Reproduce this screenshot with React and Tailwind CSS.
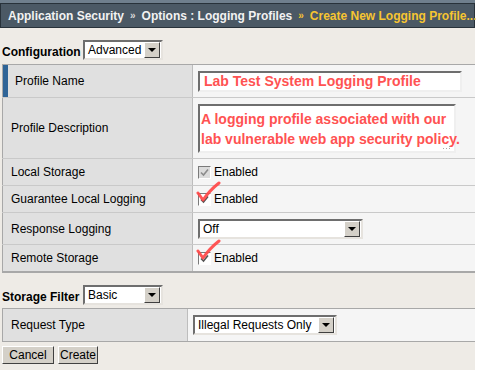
const font = { fontFamily: '"Liberation Sans", Arial, sans-serif' }

function DropButton() {
  return (
    <div className="w-[16px] h-[16px] bg-[#d4d0c8] border border-t-white border-l-white border-r-[#404040] border-b-[#404040] flex items-center justify-center shrink-0">
      <div className="w-0 h-0 border-l-[4px] border-r-[4px] border-t-[4px] border-l-transparent border-r-transparent border-t-black" />
    </div>
  )
}

function Select({ value, width }) {
  return (
    <div
      className={`${width} h-[20px] bg-white border-2 border-t-[#6e6e6e] border-l-[#6e6e6e] border-r-[#e6e3de] border-b-[#e6e3de] flex items-center justify-between pl-[3px] pr-[1px]`}
    >
      <span className="text-[12px] text-black leading-none">{value}</span>
      <DropButton />
    </div>
  )
}

function Checkbox({ disabled }) {
  return (
    <div
      className={`w-[13px] h-[13px] border border-t-[#7a7a7a] border-l-[#7a7a7a] border-r-white border-b-white flex items-center justify-center ${
        disabled ? 'bg-[#dcdcdc]' : 'bg-white'
      }`}
    >
      <svg width="9" height="9" viewBox="0 0 9 9">
        <path d="M1 4.5 L3.5 7 L8 1.5" fill="none" stroke={disabled ? '#8c8c8c' : '#555'} strokeWidth="1.6" />
      </svg>
    </div>
  )
}

function RedCheck({ top }) {
  return (
    <svg
      className="absolute left-[-2px] pointer-events-none"
      style={{ top }}
      width="26"
      height="24"
      viewBox="0 0 26 24"
    >
      <path
        d="M2 12 L7 19 Q14 9 23 2"
        fill="none"
        stroke="#ff4747"
        strokeWidth="3"
        strokeLinecap="round"
        strokeLinejoin="round"
        opacity="0.92"
      />
    </svg>
  )
}

function Row({ label, height, first, last, children, labelPad = 'pl-[8px]' }) {
  return (
    <div
      className={`flex ${height} ${last ? 'border-b-2 border-b-[#a8a8a8]' : 'border-b border-b-[#c9c9c9]'}`}
    >
      <div className="w-[191px] shrink-0 bg-[#e0e0e0] border-l border-l-[#a8a8a8] border-r border-r-[#bdbdbd] flex items-center">
        {first && <div className="w-[5px] self-stretch bg-[#2f6497]" />}
        <span className={`text-[12px] text-black ${first ? 'pl-[7px]' : labelPad}`}>{label}</span>
      </div>
      <div className="flex-1 bg-[#f5f5f5] flex items-center pl-[5px]">{children}</div>
    </div>
  )
}

function Enabled({ disabled, check }) {
  return (
    <div className="relative flex items-center gap-[3px]">
      <Checkbox disabled={disabled} />
      <span className="text-[12px] text-black">Enabled</span>
      {check && <RedCheck top={check} />}
    </div>
  )
}

export default function App() {
  return (
    <div className="w-[486px] h-[370px] flex bg-white overflow-hidden" style={font}>
      <div className="w-[475px] h-full bg-[#eeebe6] flex flex-col">
        {/* breadcrumb bar */}
        <div className="h-[3px] bg-[#6f7f8d]" />
        <div className="h-[25px] bg-[#4b5965] border border-[#28323a] flex items-center pl-[7px] text-[12px] font-bold whitespace-nowrap">
          <span className="text-[#f2f2f2]">Application Security</span>
          <span className="text-[#d8d8d8] text-[10px] mx-[6px]">»</span>
          <span className="text-[#f2f2f2]">Options : Logging Profiles</span>
          <span className="text-[#f7c531] text-[10px] mx-[6px]">»</span>
          <span className="text-[#f7c531]">Create New Logging Profile...</span>
        </div>

        <div className="pl-[2px] flex flex-col">
          <div className="flex items-center h-[20px] mt-[12px]">
            <span className="w-[81px] text-[12px] font-bold text-black pt-[4px]">Configuration</span>
            <Select value="Advanced" width="w-[80px]" />
          </div>

          <div className="mt-[4px] border-t border-t-[#a8a8a8]">
            <Row label="Profile Name" height="h-[33px]" first>
              <div className="w-[264px] h-[21px] bg-white border-2 border-t-[#6e6e6e] border-l-[#6e6e6e] border-r-[#efefef] border-b-[#efefef] flex items-center pl-[4px]">
                <span className="text-[14px] font-bold text-[#ff5252] leading-none">
                  Lab Test System Logging Profile
                </span>
              </div>
            </Row>
            <Row label="Profile Description" height="h-[61px]">
              <div className="relative w-[258px] h-[49px] bg-white border-2 border-t-[#6e6e6e] border-l-[#6e6e6e] border-r-[#efefef] border-b-[#efefef] flex flex-col justify-center pl-[1px] pt-[2px]">
                <span className="text-[14px] font-bold text-[#ff5252] leading-[20px] whitespace-nowrap">
                  A logging profile associated with our
                </span>
                <span className="text-[14px] font-bold text-[#ff5252] leading-[20px] whitespace-nowrap">
                  lab vulnerable web app security policy.
                </span>
                <svg className="absolute right-[3px] bottom-[1px]" width="8" height="4" viewBox="0 0 8 4">
                  <rect x="0" y="2" width="1" height="1" fill="#a8a8a8" />
                  <rect x="3" y="2" width="1" height="1" fill="#a8a8a8" />
                  <rect x="6" y="2" width="1" height="1" fill="#a8a8a8" />
                  <rect x="6" y="0" width="1" height="1" fill="#a8a8a8" />
                </svg>
              </div>
            </Row>
            <Row label="Local Storage" height="h-[27px]">
              <Enabled disabled />
            </Row>
            <Row label="Guarantee Local Logging" height="h-[27px]">
              <Enabled check="-9px" />
            </Row>
            <Row label="Response Logging" height="h-[32px]">
              <Select value="Off" width="w-[165px]" />
            </Row>
            <Row label="Remote Storage" height="h-[28px]" last>
              <Enabled check="-10px" />
            </Row>
          </div>

          <div className="flex items-center h-[20px] mt-[12px]">
            <span className="w-[81px] text-[12px] font-bold text-black pt-[4px]">Storage Filter</span>
            <Select value="Basic" width="w-[80px]" />
          </div>

          <div className="mt-[3px] border-t border-t-[#a8a8a8] border-b border-b-[#a8a8a8] flex h-[34px]">
            <div className="w-[186px] shrink-0 bg-[#e0e0e0] border-l border-l-[#a8a8a8] border-r border-r-[#bdbdbd] flex items-center pl-[8px]">
              <span className="text-[12px] text-black">Request Type</span>
            </div>
            <div className="flex-1 bg-[#f5f5f5] flex items-center pl-[5px]">
              <Select value="Illegal Requests Only" width="w-[144px]" />
            </div>
          </div>

          <div className="flex gap-[4px] mt-[4px]">
            <button className="w-[52px] h-[18px] bg-[#d4d0c8] border border-t-white border-l-white border-r-[#404040] border-b-[#404040] text-[12px] leading-none text-black">
              Cancel
            </button>
            <button className="w-[40px] h-[18px] bg-[#d4d0c8] border border-t-white border-l-white border-r-[#404040] border-b-[#404040] text-[12px] leading-none text-black">
              Create
            </button>
          </div>
        </div>
      </div>
    </div>
  )
}
